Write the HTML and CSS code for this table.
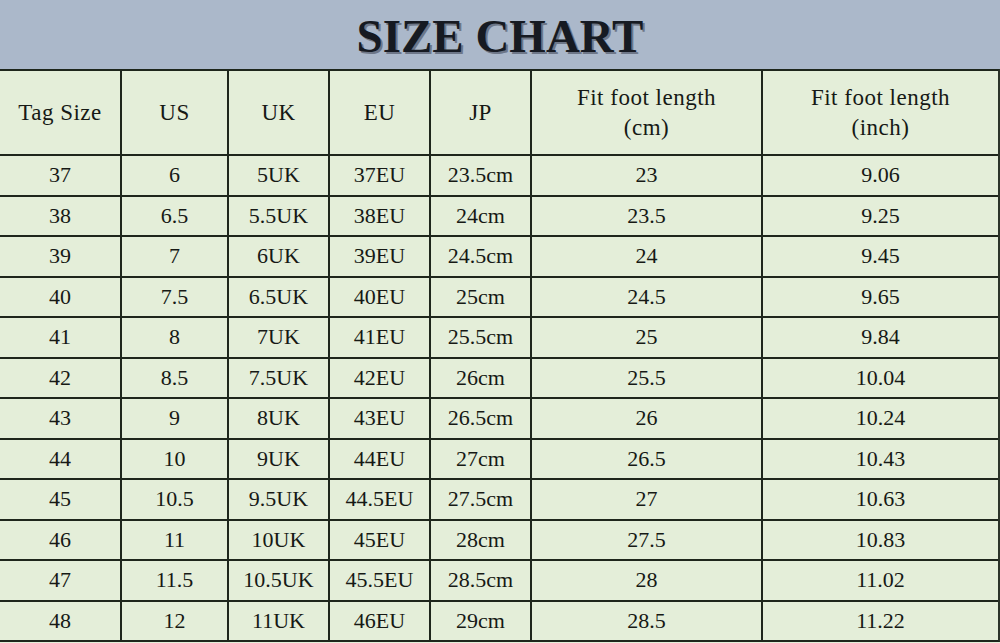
FILE: index.html
```html
<!DOCTYPE html>
<html>
<head>
<meta charset="utf-8">
<link rel="stylesheet" href="styles.css">
</head>
<body>
<div class="title"><h1>SIZE CHART</h1></div>
<div class="chart">
  <div class="cell head">Tag Size</div>
  <div class="cell head">US</div>
  <div class="cell head">UK</div>
  <div class="cell head">EU</div>
  <div class="cell head">JP</div>
  <div class="cell head">Fit foot length<br>(cm)</div>
  <div class="cell head">Fit foot length<br>(inch)</div>

  <div class="cell">37</div><div class="cell">6</div><div class="cell">5UK</div><div class="cell">37EU</div><div class="cell">23.5cm</div><div class="cell">23</div><div class="cell">9.06</div>
  <div class="cell">38</div><div class="cell">6.5</div><div class="cell">5.5UK</div><div class="cell">38EU</div><div class="cell">24cm</div><div class="cell">23.5</div><div class="cell">9.25</div>
  <div class="cell">39</div><div class="cell">7</div><div class="cell">6UK</div><div class="cell">39EU</div><div class="cell">24.5cm</div><div class="cell">24</div><div class="cell">9.45</div>
  <div class="cell">40</div><div class="cell">7.5</div><div class="cell">6.5UK</div><div class="cell">40EU</div><div class="cell">25cm</div><div class="cell">24.5</div><div class="cell">9.65</div>
  <div class="cell">41</div><div class="cell">8</div><div class="cell">7UK</div><div class="cell">41EU</div><div class="cell">25.5cm</div><div class="cell">25</div><div class="cell">9.84</div>
  <div class="cell">42</div><div class="cell">8.5</div><div class="cell">7.5UK</div><div class="cell">42EU</div><div class="cell">26cm</div><div class="cell">25.5</div><div class="cell">10.04</div>
  <div class="cell">43</div><div class="cell">9</div><div class="cell">8UK</div><div class="cell">43EU</div><div class="cell">26.5cm</div><div class="cell">26</div><div class="cell">10.24</div>
  <div class="cell">44</div><div class="cell">10</div><div class="cell">9UK</div><div class="cell">44EU</div><div class="cell">27cm</div><div class="cell">26.5</div><div class="cell">10.43</div>
  <div class="cell">45</div><div class="cell">10.5</div><div class="cell">9.5UK</div><div class="cell">44.5EU</div><div class="cell">27.5cm</div><div class="cell">27</div><div class="cell">10.63</div>
  <div class="cell">46</div><div class="cell">11</div><div class="cell">10UK</div><div class="cell">45EU</div><div class="cell">28cm</div><div class="cell">27.5</div><div class="cell">10.83</div>
  <div class="cell">47</div><div class="cell">11.5</div><div class="cell">10.5UK</div><div class="cell">45.5EU</div><div class="cell">28.5cm</div><div class="cell">28</div><div class="cell">11.02</div>
  <div class="cell">48</div><div class="cell">12</div><div class="cell">11UK</div><div class="cell">46EU</div><div class="cell">29cm</div><div class="cell">28.5</div><div class="cell">11.22</div>
</div>
</body>
</html>
```
FILE: styles.css
```css
html, body {
  margin: 0;
  padding: 0;
  width: 1000px;
  height: 643px;
  overflow: hidden;
  background: #e4eed9;
}
body {
  font-family: "Liberation Serif", "Times New Roman", serif;
  color: #161915;
}
.title {
  height: 69px;
  background: #abb8ca;
  display: flex;
  align-items: center;
  justify-content: center;
}
.title h1 {
  margin: 0;
  padding-top: 2px;
  font-size: 47px;
  font-weight: bold;
  letter-spacing: 0;
  color: #161a22;
  text-shadow: 2px 2px 0 #6e7788;
}
.chart {
  display: grid;
  grid-template-columns: 120px 105px 99px 99px 99px 229px 1fr;
  grid-template-rows: 83px repeat(12, 38.5px);
  gap: 2px;
  background: #1e261c;
  border-top: 2px solid #1e261c;
  border-bottom: 2px solid #1e261c;
  border-right: 2px solid #2b3329;
}
.cell {
  background: #e4eed9;
  display: flex;
  align-items: center;
  justify-content: center;
  text-align: center;
  font-size: 22px;
  line-height: 30px;
}
.head {
  font-size: 23px;
  letter-spacing: 0.5px;
}
```
